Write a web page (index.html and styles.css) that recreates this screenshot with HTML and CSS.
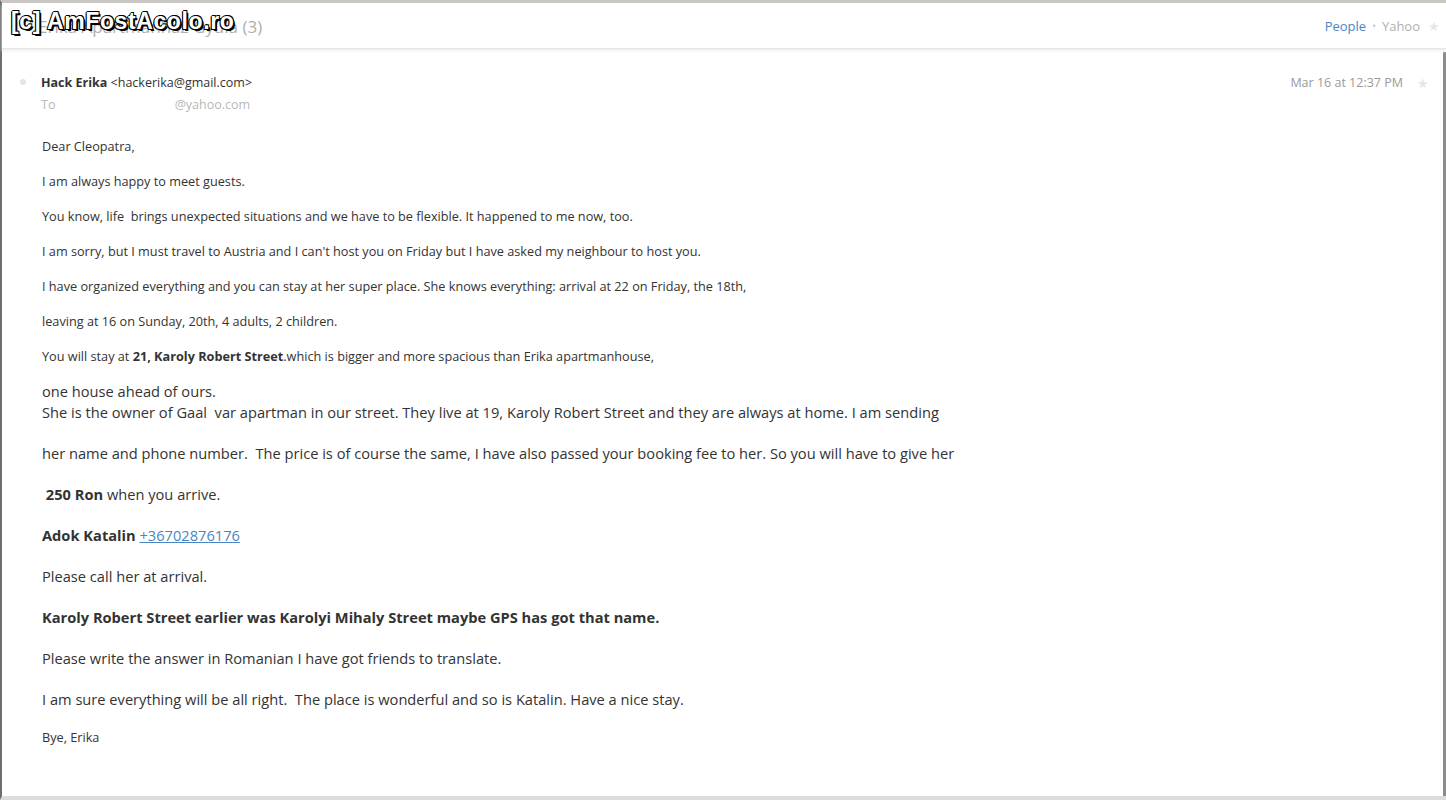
FILE: index.html
```html
<!DOCTYPE html>
<html lang="en">
<head>
  <meta charset="UTF-8">
  <title>Erika Apartmanház Gyula</title>
  <link rel="stylesheet" href="styles.css">
</head>
<body>
  <div class="window">
    <header class="thread-head">
      <div class="subject">Erika Apartmanház Gyula <span class="count">(3)</span></div>
      <div class="watermark">[c] AmFostAcolo.ro</div>
      <div class="head-links">
        <a class="people" href="#">People</a>
        <span class="dot">•</span>
        <span class="yahoo">Yahoo</span>
        <span class="star">★</span>
      </div>
    </header>

    <section class="message">
      <div class="msg-head">
        <span class="bullet"></span>
        <div class="from">
          <div><b>Hack Erika</b> &lt;hackerika@gmail.com&gt;</div>
          <div class="to">To <span class="hidden-addr"></span>@yahoo.com</div>
        </div>
        <div class="date">Mar 16 at 12:37 PM</div>
        <span class="star">★</span>
      </div>

      <div class="body">
        <p class="small">Dear Cleopatra,</p>
        <p class="small">I am always happy to meet guests.</p>
        <p class="small">You know, life&nbsp; brings unexpected situations and we have to be flexible. It happened to me now, too.</p>
        <p class="small">I am sorry, but I must travel to Austria and I can't host you on Friday but I have asked my neighbour to host you.</p>
        <p class="small">I have organized everything and you can stay at her super place. She knows everything: arrival at 22 on Friday, the 18th,</p>
        <p class="small">leaving at 16 on Sunday, 20th, 4 adults, 2 children.</p>
        <p class="small">You will stay at <b>21, Karoly Robert Street</b>.which is bigger and more spacious than Erika apartmanhouse,</p>

        <p class="big first">one house ahead of ours.<br>She is the owner of Gaal&nbsp; var apartman in our street. They live at 19, Karoly Robert Street and they are always at home. I am sending</p>
        <p class="big">her name and phone number.&nbsp; The price is of course the same, I have also passed your booking fee to her. So you will have to give her</p>
        <p class="big">&nbsp;<b>250 Ron</b> when you arrive.</p>
        <p class="big"><b>Adok Katalin</b> <a href="#">+36702876176</a></p>
        <p class="big">Please call her at arrival.</p>
        <p class="big"><b>Karoly Robert Street earlier was Karolyi Mihaly Street maybe GPS has got that name.</b></p>
        <p class="big">Please write the answer in Romanian I have got friends to translate.</p>
        <p class="big">I am sure everything will be all right.&nbsp; The place is wonderful and so is Katalin. Have a nice stay.</p>
        <p class="small">Bye, Erika</p>
      </div>
    </section>
  </div>
</body>
</html>
```

FILE: styles.css
```css
body {
  margin: 0;
  background-color: #d8d6d3;
  font-family: 'Open Sans', 'Segoe UI', sans-serif;
  color: #333333;
}

.window {
  height: 800px;
  box-sizing: border-box;
  border-top: 3px solid #c9c5c1;
  border-left: 2px solid #6e6e6e;
  border-bottom: 4px solid #dcdcdc;
  background-color: #ffffff;
  display: flex;
  flex-direction: column;
}

.thread-head {
  position: relative;
  height: 45px;
  display: flex;
  align-items: center;
  padding: 0 6px 0 36px;
  border-bottom: 1px solid #e6e6e6;
  box-shadow: 0 2px 3px #eeeeee;
}

.subject {
  font-size: 17px;
  color: #b0b0b0;
  padding-top: 2px;
}

.watermark {
  position: absolute;
  left: 9px;
  top: 5px;
  font-family: 'Liberation Sans', Arial, sans-serif;
  font-weight: bold;
  font-size: 23px;
  color: #ffffff;
  letter-spacing: 0.6px;
  text-shadow: 1px 1px 0 #000, -1px 0 0 #000, 0 -1px 0 #000, 1px -1px 0 #000, -1px 1px 0 #000, 2px 2px 0 #000;
}

.head-links {
  margin-left: auto;
  display: flex;
  align-items: center;
  gap: 6px;
  font-size: 13px;
  color: #b0b0b0;
}

.people {
  color: #4a86c4;
  text-decoration: none;
}

.dot {
  font-size: 10px;
  color: #c8c8c8;
}

.star {
  color: #e6e6e6;
  font-size: 13px;
}

.head-links .star {
  margin-left: 2px;
}

.message {
  flex: 1;
  margin-top: 3px;
  border-right: 3px solid #8c8c8c;
}

.msg-head {
  display: flex;
  align-items: flex-start;
  padding: 20px 14px 0 18px;
  font-size: 12.5px;
}

.bullet {
  width: 6px;
  height: 6px;
  margin: 7px 15px 0 0;
  border-radius: 50%;
  background-color: #e4e4e4;
}

.from {
  line-height: 22px;
}

.to {
  color: #b8b8b8;
}

.hidden-addr {
  display: inline-block;
  width: 116px;
}

.date {
  margin-left: auto;
  line-height: 22px;
  color: #9a9a9a;
}

.msg-head .star {
  margin-left: 14px;
  line-height: 22px;
}

.body {
  padding: 13px 0 0 40px;
}

.body p {
  margin: 0;
}

.small {
  font-size: 12.7px;
  line-height: 35px;
}

.big {
  font-size: 14.65px;
  line-height: 41px;
}

.big.first {
  line-height: 21px;
  padding-top: 7px;
  margin-bottom: 10px;
}

.body a {
  color: #4a86c4;
}
```
